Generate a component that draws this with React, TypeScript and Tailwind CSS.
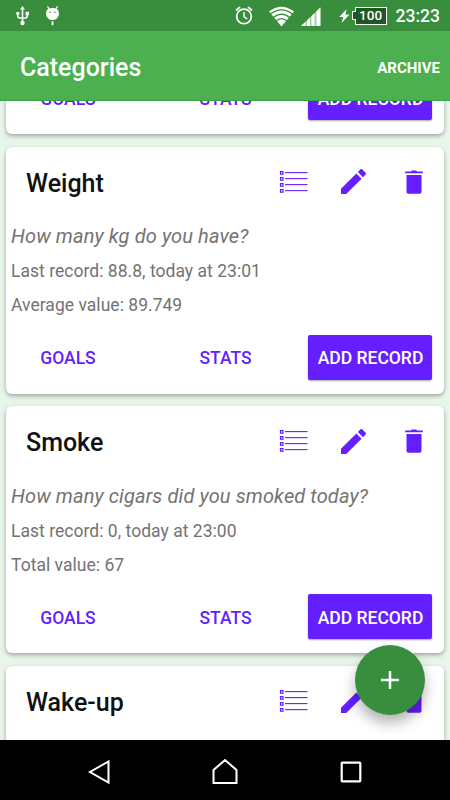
import React from "react";

type Category = { title: string; question: string; last: string; summary: string };

const categories: Category[] = [
  { title: "Weight", question: "How many kg do you have?", last: "Last record: 88.8, today at 23:01", summary: "Average value: 89.749" },
  { title: "Smoke", question: "How many cigars did you smoked today?", last: "Last record: 0, today at 23:00", summary: "Total value: 67" },
];

function ListIcon() {
  return (
    <svg width="30" height="24" viewBox="0 0 30 24" fill="none" stroke="#651fff">
      {[2.9, 8.9, 14.9, 20.9].map((y) => (
        <g key={y}>
          <rect x="1.5" y={y - 1.3} width="2.5" height="2.6" strokeWidth="1.2" />
          <path d={`M6 ${y - 0.3}H28.5`} strokeWidth="1.1" />
        </g>
      ))}
    </svg>
  );
}

function PencilIcon() {
  return (
    <svg width="25" height="25" viewBox="3 3 18 18" fill="#651fff">
      <path d="M3 17.25V21h3.75L17.81 9.94l-3.75-3.75L3 17.25zM20.71 7.04c.39-.39.39-1.02 0-1.41l-2.34-2.34c-.39-.39-1.02-.39-1.41 0l-1.83 1.83 3.75 3.75 1.83-1.83z" />
    </svg>
  );
}

function TrashIcon() {
  return (
    <svg width="18" height="24" viewBox="0 0 18 24" fill="#651fff">
      <path d="M0.2 1.4H6L6.8 0.4H11.2L12 1.4H17.8V3.2H0.2ZM1.5 5H16.5V22Q16.5 23.8 14.7 23.8H3.3Q1.5 23.8 1.5 22Z" />
    </svg>
  );
}

function CardHeader({ title }: { title: string }) {
  return (
    <header className="flex h-[72px] items-center pr-[21px] pl-5">
      <h2 className="flex-1 pt-[2px] text-[25px] font-medium text-[#111]">{title}</h2>
      <div className="mt-[-2px] flex items-center">
        <ListIcon />
        <span className="ml-8 flex"><PencilIcon /></span>
        <span className="ml-[39px] flex"><TrashIcon /></span>
      </div>
    </header>
  );
}

function CardActions() {
  return (
    <div className="flex h-[45px] items-center pr-3 text-[17.5px] font-medium text-[#651fff]">
      <button className="w-[124px] pt-[2px]">GOALS</button>
      <button className="ml-[33px] w-[125px] pt-[2px]">STATS</button>
      <button className="ml-auto h-[45px] w-[124px] rounded-[2px] bg-[#651fff] pt-[2px] pl-px whitespace-nowrap text-white shadow-[0_1px_2px_rgba(0,0,0,0.35)]">ADD RECORD</button>
    </div>
  );
}

function CategoryCard({ title, question, last, summary }: Category) {
  return (
    <article className="flex h-[247px] shrink-0 flex-col rounded-[6px] bg-white shadow-[0_2px_4px_rgba(0,0,0,0.32)]">
      <CardHeader title={title} />
      <div className="mt-[-0.6px] mb-[12.6px] pl-[5px] text-[17.5px] leading-[34px] tracking-[0.03px] text-[#737373]">
        <p className="text-[20px] leading-9 tracking-[0.12px] italic">{question}</p>
        <p>{last}</p>
        <p>{summary}</p>
      </div>
      <CardActions />
    </article>
  );
}

function StatusBar() {
  return (
    <div className="flex h-[31px] shrink-0 items-center bg-[#388e3c] text-white">
      <svg className="ml-[15px]" width="15" height="21" viewBox="0 0 15 21" fill="none" stroke="white" strokeWidth="1.6">
        <path d="M7.5 3V18M2.8 9v2q0 2 2 2h5.4q2 0 2-2V9" />
        <path d="M7.5 1 10 4.5H5Z" fill="white" stroke="none" />
        <circle cx="2.8" cy="8.5" r="1.8" fill="white" stroke="none" />
        <path d="M10.5 6.8H14V10.2H10.5Z" fill="white" stroke="none" />
        <circle cx="7.5" cy="18" r="2.2" fill="white" stroke="none" />
      </svg>
      <svg className="ml-[15px]" width="15" height="21" viewBox="0 0 15 21" fill="none" stroke="white">
        <path d="M2.4 1.4 4.4 4M12.6 1.4 10.6 4" strokeWidth="1.2" />
        <path d="M3.2 3.7Q7.5 2.4 11.8 3.7Q14 5.2 14 8.6A6.5 6.5 0 0 1 1 8.6Q1 5.2 3.2 3.7Z" fill="white" stroke="none" />
        <path d="M7.5 16.3V20.2" strokeWidth="1.8" />
        <circle cx="5" cy="7.2" r=".8" fill="#388e3c" stroke="none" />
        <circle cx="10" cy="7.2" r=".8" fill="#388e3c" stroke="none" />
      </svg>
      <div className="ml-auto flex items-center pr-[10px]">
        <svg width="18" height="19" viewBox="0 0 18 19" fill="none" stroke="white">
          <circle cx="9" cy="10.4" r="7.3" strokeWidth="1.7" />
          <path d="M9 6V10.8L12.2 12.8" strokeWidth="1.4" />
          <path d="M1 4.5 5 1M17 4.5 13 1" strokeWidth="1.8" />
        </svg>
        <svg className="mt-[2px] ml-4" width="25" height="21" viewBox="0 0 25 21">
          <path d="M0 5.6Q12.5-4 25 5.6L12.5 20.5Z" fill="white" />
          <path d="M0.5 8.8Q12.5-1 24.5 8.8M3.7 12Q12.5 4.3 21.3 12M6.6 15.3Q12.5 9.8 18.4 15.3" fill="none" stroke="#388e3c" strokeWidth="1.2" />
        </svg>
        <svg className="mt-[2px] ml-[7px]" width="20" height="20" viewBox="0 0 20 20">
          <path d="M0 19 19.4 0.5V19Z" fill="#a5cda7" />
          <path d="M0 19 4.5 14.8V19ZM6 13.4 9 10.6V19H6ZM10.5 9.3 13.5 6.2V19H10.5ZM15.5 4.3 19.4 0.5V19H15.5Z" fill="white" />
        </svg>
        <svg className="ml-[18px]" width="11" height="16" viewBox="0 0 12 16" fill="white">
          <path d="M8.5.3.3 9H4.7L2.8 15.6 11.4 6.3H6.8Z" />
        </svg>
        <div className="ml-[2px] flex items-center">
          <span className="z-10 mr-[-1px] h-[9px] w-[4px] border-y border-l border-white bg-[#1f5722]" />
          <span className="flex h-[18px] w-[32px] items-center justify-center border border-white bg-[#1f5722] text-[13.5px] leading-none font-medium">100</span>
        </div>
        <span className="ml-[9px] pt-[2px] text-[17.5px] leading-none font-medium">23:23</span>
      </div>
    </div>
  );
}

export default function App() {
  return (
    <div className="relative flex h-[800px] w-[450px] flex-col overflow-hidden bg-[#e8f5e9] font-['Roboto','Noto_Sans',sans-serif]">
      <StatusBar />
      <header className="flex h-[70px] shrink-0 items-center justify-between border-b border-[#38a53c] bg-[#4caf50] pt-[5px] pr-[10px] pl-5 text-white">
        <h1 className="text-[25px] font-medium">Categories</h1>
        <button className="text-[15px] font-bold">ARCHIVE</button>
      </header>
      <main className="min-h-0 flex-1 overflow-hidden px-[6px]">
        <div className="mt-[-25.8px] flex flex-col gap-[12.5px]">
          <article className="h-[59px] shrink-0 rounded-b-[6px] bg-white shadow-[0_2px_4px_rgba(0,0,0,0.32)]">
            <CardActions />
          </article>
          {categories.map((category) => (
            <CategoryCard key={category.title} {...category} />
          ))}
          <article className="h-[90px] shrink-0 rounded-t-[6px] bg-white shadow-[0_2px_4px_rgba(0,0,0,0.32)]">
            <CardHeader title="Wake-up" />
          </article>
        </div>
      </main>
      <nav className="grid h-[60px] shrink-0 grid-cols-[37px_1fr_1fr_1fr_37px] place-items-center bg-black pt-[3px]">
        <svg className="col-start-2 mr-1" width="24" height="26" viewBox="0 0 24 26" fill="none" stroke="white" strokeWidth="2">
          <path d="M22.5 2.5V23.5L4 13Z" />
        </svg>
        <svg width="28" height="28" viewBox="0 0 28 28" fill="none" stroke="white" strokeWidth="2">
          <path d="M2.5 12 14 2 25.5 12V25H2.5Z" />
        </svg>
        <svg className="ml-px" width="22" height="22" viewBox="0 0 22 22" fill="none" stroke="white" strokeWidth="2.2">
          <rect x="1.7" y="1.7" width="18.6" height="18.6" rx=".5" />
        </svg>
      </nav>
      <button aria-label="Add category" className="absolute right-[25px] bottom-[85px] flex size-[70px] items-center justify-center rounded-full bg-[#388e3c] shadow-[0_8px_14px_rgba(0,0,0,0.3)]">
        <svg width="18" height="18" viewBox="0 0 18 18" stroke="white" strokeWidth="2.5">
          <path d="M9 0V18M0 9H18" />
        </svg>
      </button>
    </div>
  );
}
